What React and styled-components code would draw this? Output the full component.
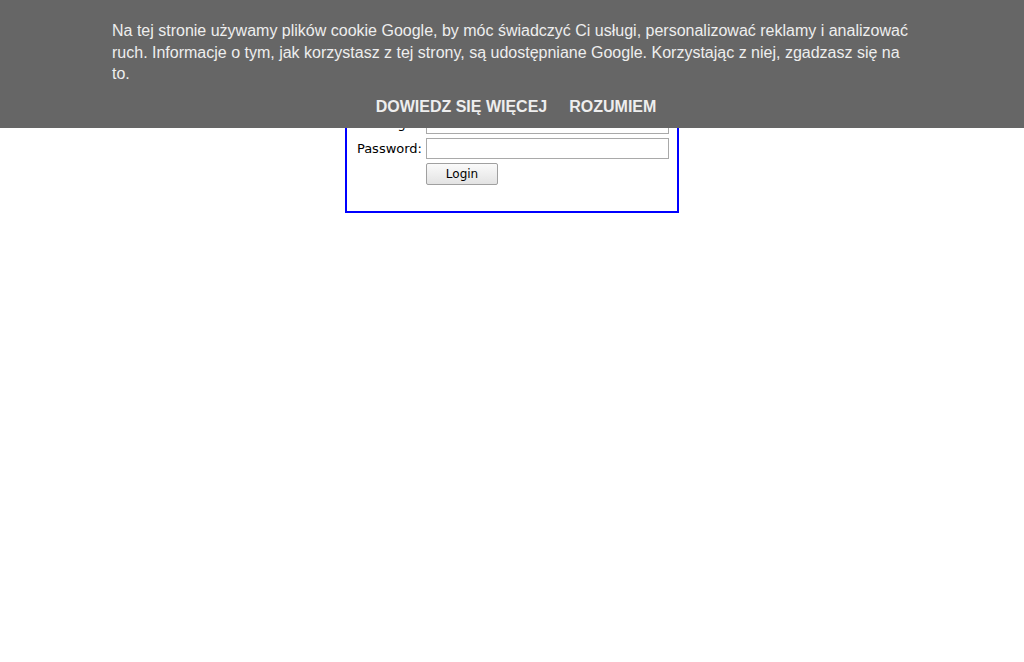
import React from "react";
import styled, { createGlobalStyle } from "styled-components";

const Global = createGlobalStyle`
  html, body { background: #fff; }
  body { margin: 8px; font-family: "DejaVu Sans", Verdana, sans-serif; }
`;

const Banner = styled.div`
  position: fixed;
  top: 0;
  left: 0;
  right: 0;
  height: 128px;
  box-sizing: border-box;
  background: #666666;
  padding-top: 20px;
  z-index: 10;
  font-family: "Liberation Sans", Arial, sans-serif;
`;

const BannerText = styled.div`
  width: 800px;
  margin: 0 auto;
  color: #eeeeee;
  font-size: 16px;
  line-height: 21.5px;
`;

const Actions = styled.div`
  display: flex;
  justify-content: center;
  gap: 22px;
  margin-top: 11px;
  padding-left: 8px;
`;

const ActionLink = styled.a`
  color: #eeeeee;
  font-weight: bold;
  font-size: 16px;
  line-height: 22px;
  text-decoration: none;
  text-transform: uppercase;
  cursor: pointer;
`;

const Box = styled.div`
  width: 314px;
  margin: 50px auto 0;
  border: 2px solid #0000ff;
  padding: 53px 8px 26px;
`;

const Form = styled.form`
  display: grid;
  grid-template-columns: 67px 243px;
  column-gap: 4px;
  row-gap: 4px;
  align-items: center;
`;

const Label = styled.label`
  font-size: 13px;
  color: #000;
  text-align: right;
  white-space: nowrap;
`;

const Input = styled.input`
  box-sizing: border-box;
  width: 243px;
  height: 21px;
  border: 1px solid #a9a9a9;
  padding: 1px 2px;
  margin: 0;
  font-size: 13px;
`;

const Button = styled.button`
  grid-column: 2;
  justify-self: start;
  box-sizing: border-box;
  width: 72px;
  height: 22px;
  margin: 0;
  padding: 0;
  border: 1px solid #a0a0a0;
  border-radius: 2px;
  background: linear-gradient(#fafafa, #e3e3e3);
  font-family: "DejaVu Sans", Verdana, sans-serif;
  font-size: 12px;
  color: #000;
`;

export default function App() {
  return (
    <>
      <Global />
      <Box>
        <Form onSubmit={(e) => e.preventDefault()}>
          <Label htmlFor="login">Login:</Label>
          <Input id="login" type="text" />
          <Label htmlFor="password">Password:</Label>
          <Input id="password" type="password" />
          <Button type="submit">Login</Button>
        </Form>
      </Box>
      <Banner>
        <BannerText>
          Na tej stronie używamy plików cookie Google, by móc świadczyć Ci usługi, personalizować reklamy i analizować ruch. Informacje o tym, jak korzystasz z tej strony, są udostępniane Google. Korzystając z niej, zgadzasz się na to.
          <Actions>
            <ActionLink>Dowiedz się więcej</ActionLink>
            <ActionLink>Rozumiem</ActionLink>
          </Actions>
        </BannerText>
      </Banner>
    </>
  );
}
